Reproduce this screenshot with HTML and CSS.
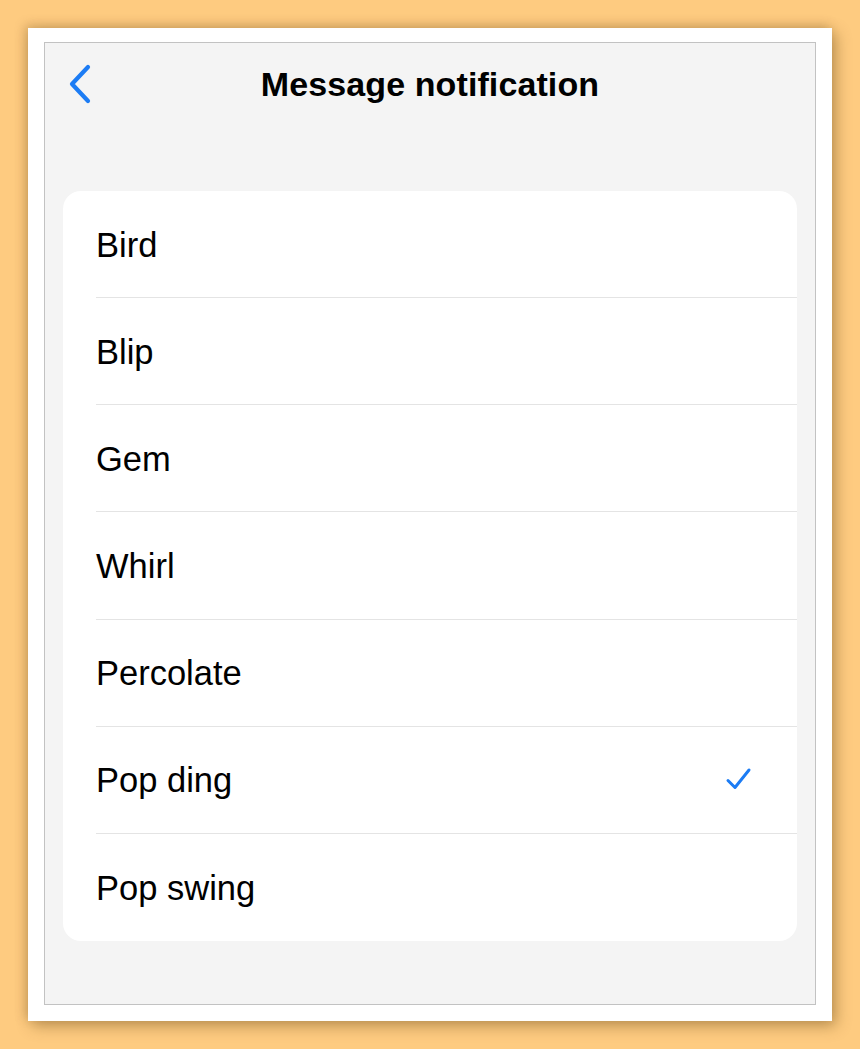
FILE: index.html
```html
<!DOCTYPE html>
<html lang="en">
<head>
<meta charset="utf-8">
<title>Message notification</title>
<link rel="stylesheet" href="styles.css">
</head>
<body>
<div class="frame">
  <div class="screen">
    <header class="nav">
      <div class="nav-left">
        <svg class="back" width="24" height="40" viewBox="0 0 24 40" aria-hidden="true">
          <path d="M20 3 L4 20 L20 37" fill="none" stroke="#1c7cf4" stroke-width="4.2" stroke-linecap="round" stroke-linejoin="round"/>
        </svg>
      </div>
      <h1 class="title">Message notification</h1>
      <div class="nav-right"></div>
    </header>
    <ul class="card">
      <li class="row"><span>Bird</span></li>
      <li class="row"><span>Blip</span></li>
      <li class="row"><span>Gem</span></li>
      <li class="row"><span>Whirl</span></li>
      <li class="row"><span>Percolate</span></li>
      <li class="row selected"><span>Pop ding</span>
        <svg class="check" width="28" height="26" viewBox="0 0 28 26" aria-hidden="true">
          <path d="M3 13.5 L10 20.5 L24 3" fill="none" stroke="#1c7cf4" stroke-width="3" stroke-linecap="round" stroke-linejoin="round"/>
        </svg>
      </li>
      <li class="row"><span>Pop swing</span></li>
    </ul>
  </div>
</div>
</body>
</html>
```
FILE: styles.css
```css
* { box-sizing: border-box; }
html, body { margin: 0; padding: 0; }
body {
  background: #fecb80;
  font-family: "Liberation Sans", Arial, sans-serif;
  color: #000;
  padding: 28px 0 0 28px;
  height: 1049px;
  overflow: hidden;
}
.frame {
  width: 804px;
  height: 993px;
  background: #fff;
  padding: 14px 16px 16px 16px;
  box-shadow: 4px 5px 14px rgba(110, 80, 30, 0.45), -3px -3px 10px rgba(110, 80, 30, 0.25);
}
.screen {
  height: 963px;
  border: 1px solid #c2c2c2;
  background: #f4f4f4;
  padding: 0 18px;
}
.nav {
  display: grid;
  grid-template-columns: 1fr auto 1fr;
  align-items: center;
  height: 82px;
}
.nav-left { display: flex; align-items: center; padding-left: 5px; }
.back { display: block; }
.title {
  margin: 0;
  font-size: 34px;
  font-weight: 700;
  letter-spacing: 0.1px;
}
.card {
  list-style: none;
  margin: 66px 0 0 0;
  padding: 0 0 0 33px;
  background: #fff;
  border-radius: 18px;
  height: 750px;
}
.row {
  height: 107.14px;
  display: flex;
  align-items: center;
  justify-content: space-between;
  padding-right: 44px;
  padding-top: 2px;
  font-size: 34.5px;
  border-bottom: 1px solid #e4e4e4;
}
.row:last-child { border-bottom: none; }
.check { display: block; margin-top: -2px; }
```
